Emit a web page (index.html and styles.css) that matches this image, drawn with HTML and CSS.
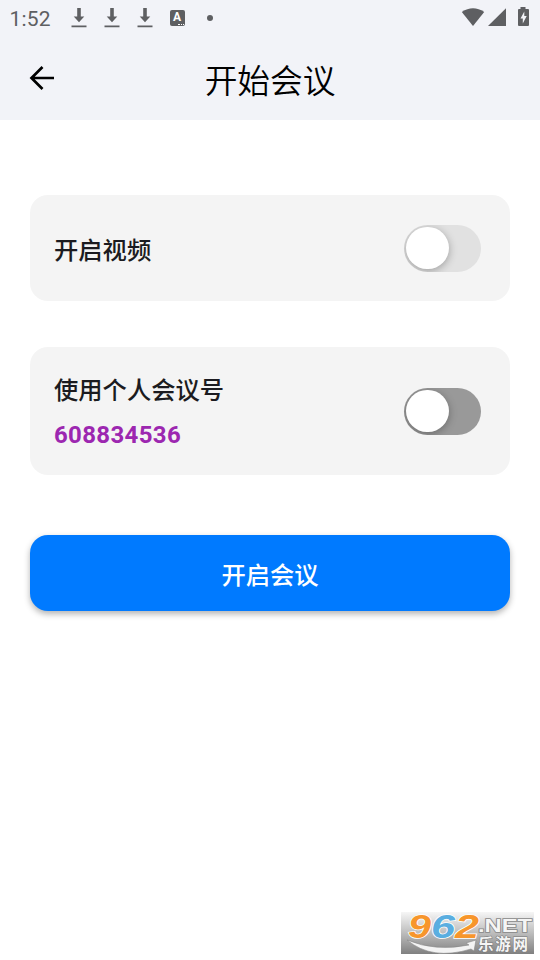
FILE: index.html
```html
<!DOCTYPE html>
<html lang="zh-CN">
<head>
<meta charset="utf-8">
<title>开始会议</title>
<link rel="stylesheet" href="styles.css">
</head>
<body>
<header class="top">
  <div class="status">
    <span class="clock">1:52</span>
    <div class="notices">
      <svg class="dl" viewBox="0 0 16 22"><path d="M6.200 1h3.600v8.500h3.500L8 15.200 2.700 9.500h3.500zM.5 18.500h15v1.700H.5z"/></svg>
      <svg class="dl" viewBox="0 0 16 22"><path d="M6.200 1h3.600v8.500h3.500L8 15.200 2.700 9.500h3.500zM.5 18.500h15v1.700H.5z"/></svg>
      <svg class="dl" viewBox="0 0 16 22"><path d="M6.200 1h3.600v8.500h3.500L8 15.200 2.700 9.500h3.500zM.5 18.500h15v1.700H.5z"/></svg>
      <span class="keyboard">A<i class="dots"></i></span>
      <span class="more"></span>
    </div>
    <svg class="system" viewBox="0 0 70 22">
      <path d="M.8 5Q12-2.500 23.200 5L12 19z"/>
      <path d="M45 1.300V19H27z"/>
      <path fill-rule="evenodd" d="M59.500 0h5v2H67q1 0 1 1v15q0 1-1 1H58q-1 0-1-1V3q0-1 1-1h1.500zM63.300 4.500L59.500 11.500h2.300v5L65.700 9h-2.400z"/>
    </svg>
  </div>
  <div class="bar">
    <svg class="back" viewBox="0 0 26 26"><path d="M25 13H2.500M13.500 2L2.500 13l11 11"/></svg>
    <h1 class="title">开始会议</h1>
  </div>
</header>
<main class="content">
  <section class="card card-video">
    <div class="label">开启视频</div>
    <div class="switch switch-light"><span class="knob"></span></div>
  </section>
  <section class="card card-id">
    <div>
      <div class="label">使用个人会议号</div>
      <div class="number">608834536</div>
    </div>
    <div class="switch"><span class="knob"></span></div>
  </section>
  <button class="start">开启会议</button>
</main>
<svg class="watermark" viewBox="0 0 133 42">
  <defs>
    <linearGradient id="shade" x2="0" y2="1"><stop stop-color="#f6f6f6"/><stop offset=".5" stop-color="#bdbdbd"/><stop offset="1" stop-color="#808080"/></linearGradient>
  </defs>
  <path fill="url(#shade)" d="M0 0h133v42H0z"/>
  <g class="digits">
    <text x="7" y="25.500" textLength="23" lengthAdjust="spacingAndGlyphs" fill="#f7962c">9</text>
    <text x="30" y="25.500" textLength="24" lengthAdjust="spacingAndGlyphs" fill="#5aaee0">6</text>
    <text x="54" y="25.500" textLength="24" lengthAdjust="spacingAndGlyphs" fill="#f7962c">2</text>
  </g>
  <text class="net" x="77" y="19.500" textLength="54" lengthAdjust="spacingAndGlyphs">.NET</text>
  <text class="site" x="77" y="37.500" textLength="50">乐游网</text>
  <path class="swoosh" d="M6 28Q35 40 68 33l-3-2 10-3-2 11-3-2Q31 49 6 28z"/>
</svg>
</body>
</html>
```
FILE: styles.css
```css
* { box-sizing: border-box; }
body {
  margin: 0;
  width: 540px;
  height: 960px;
  position: relative;
  overflow: hidden;
  background: #fff;
  font-family: Roboto, "Noto Sans CJK SC", sans-serif;
}
.top { height: 120px; background: #f2f3f8; }
.status {
  height: 36px;
  display: flex;
  align-items: center;
  padding: 0 9px 0 9.500px;
  color: #5e5f62;
}
.clock { width: 61px; font-size: 21px; letter-spacing: .2px; padding-top: 2px; }
.notices { display: flex; align-items: center; gap: 17px; flex: 1; }
.dl { width: 16px; height: 22px; fill: #5e5f62; }
.keyboard {
  width: 15px;
  height: 16px;
  border-radius: 2px;
  background: #5e5f62;
  color: #fff;
  font: bold 12px/15px Roboto, sans-serif;
  text-align: center;
  position: relative;
}
.dots { position: absolute; right: 1px; bottom: 1px; width: 6px; border-bottom: 1px dotted #fff; }
.more { width: 6px; height: 6px; border-radius: 50%; background: #5e5f62; margin-left: 5px; }
.system { width: 70px; height: 22px; fill: #5e5f62; }
.bar {
  height: 84px;
  display: grid;
  grid-template-columns: 56px 1fr 56px;
  align-items: center;
}
.back { width: 26px; height: 26px; margin-left: 29px; fill: none; stroke: #000; stroke-width: 2.700; }
.title {
  margin: 7px 0 0;
  text-align: center;
  font-size: 32.700px;
  line-height: 48px;
  font-weight: 350;
  color: #000;
}
.content { padding: 75px 30px 0; }
.card {
  display: flex;
  align-items: center;
  justify-content: space-between;
  padding: 0 29px 0 24px;
  border-radius: 18px;
  background: #f4f4f4;
}
.card-video { height: 106px; margin-bottom: 46px; }
.card-video .label { padding-top: 5px; }
.card-id { height: 128px; margin-bottom: 60px; }
.label { font-size: 24.300px; line-height: 36px; font-weight: 500; color: #1b1b20; }
.card-id .label { padding-top: 1px; }
.number {
  margin-top: 11px;
  font-size: 24px;
  line-height: 30px;
  font-weight: 700;
  letter-spacing: .35px;
  color: #9c27b0;
}
.switch {
  width: 77px;
  height: 47px;
  padding: 2px;
  border-radius: 24px;
  background: #999;
  overflow: hidden;
}
.switch-light { background: #e1e1e1; }
.knob {
  display: block;
  width: 42.500px;
  height: 42.500px;
  border-radius: 50%;
  background: #fff;
  box-shadow: 0 2px 8px rgba(0, 0, 0, .3);
}
.start {
  display: block;
  width: 100%;
  height: 76px;
  padding: 5px 0 0;
  border: 0;
  border-radius: 18px;
  background: #007aff;
  box-shadow: 0 3px 6px rgba(0, 0, 0, .3);
  color: #fff;
  font: 500 24.300px/36px Roboto, "Noto Sans CJK SC", sans-serif;
}
.watermark { position: absolute; left: 401px; top: 912px; width: 133px; height: 42px; overflow: visible; }
.digits { font: italic bold 34px "Liberation Sans", sans-serif; stroke: #fff; stroke-width: 1.500px; paint-order: stroke; }
.net { font: bold 18px "Liberation Sans", sans-serif; fill: #f5f5f5; stroke: #888; stroke-width: 1.500px; paint-order: stroke; }
.site { font: bold 15.500px "Noto Sans CJK SC", sans-serif; fill: #f5f5f5; stroke: #777; stroke-width: 1px; paint-order: stroke; }
.swoosh { fill: #f3f3f3; stroke: #888; stroke-width: .6; }
```
